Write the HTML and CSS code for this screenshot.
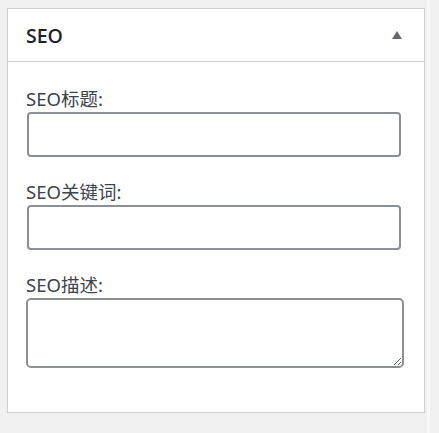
FILE: index.html
```html
<!DOCTYPE html>
<html lang="zh">
<head>
<meta charset="utf-8">
<title>SEO</title>
<link rel="stylesheet" href="styles.css">
</head>
<body>
<div class="panel">
  <div class="panel-header">
    <h2 class="panel-title">SEO</h2>
    <span class="toggle" aria-hidden="true"></span>
  </div>
  <div class="panel-body">
    <div class="field">
      <label class="label">SEO标题:</label>
      <input class="input" type="text">
    </div>
    <div class="field">
      <label class="label">SEO关键词:</label>
      <input class="input" type="text">
    </div>
    <div class="field">
      <label class="label">SEO描述:</label>
      <textarea class="textarea"></textarea>
    </div>
  </div>
</div>
</body>
</html>
```
FILE: styles.css
```css
html, body {
  margin: 0;
  padding: 0;
}
body {
  background: linear-gradient(to right, #f0f0f0 0, #f0f0f0 427px, #f8f8f8 427px, #f8f8f8 430px, #f0f0f0 430px);
  padding: 8px 0 0 7px;
  height: 433px;
  box-sizing: border-box;
  font-family: "Noto Sans", "Noto Sans CJK SC", sans-serif;
  color: #3c434a;
}
.panel {
  width: 418px;
  box-sizing: border-box;
  border: 1px solid #cdcfd1;
  background: #fff;
}
.panel-header {
  height: 52px;
  border-bottom: 1px solid #cdcfd1;
  display: flex;
  align-items: center;
  justify-content: space-between;
  padding: 0 22px 0 18px;
}
.panel-title {
  margin: 0;
  font-family: "Open Sans", "Noto Sans", sans-serif;
  font-size: 19.5px;
  font-weight: 600;
  color: #1d2327;
}
.toggle {
  width: 0;
  height: 0;
  border-left: 5px solid transparent;
  border-right: 5px solid transparent;
  border-bottom: 8px solid #646970;
  margin-top: -1px;
}
.panel-body {
  padding: 25px 0 44px 18px;
}
.field {
  display: flex;
  flex-direction: column;
  align-items: flex-start;
}
.field + .field {
  margin-top: 23px;
}
.label {
  font-size: 18.5px;
  line-height: 24px;
  color: #3c434a;
}
.input {
  margin: 1px 0 0 1px;
  width: 374px;
  height: 45px;
  box-sizing: border-box;
  border: 2px solid #8c8f94;
  border-radius: 4px;
  background: #fff;
  outline: none;
}
.textarea {
  margin: 1px 0 0 0;
  width: 378px;
  height: 70px;
  box-sizing: border-box;
  border: 2px solid #8c8f94;
  border-radius: 5px;
  background: #fff;
  outline: none;
  font-family: inherit;
}
```
